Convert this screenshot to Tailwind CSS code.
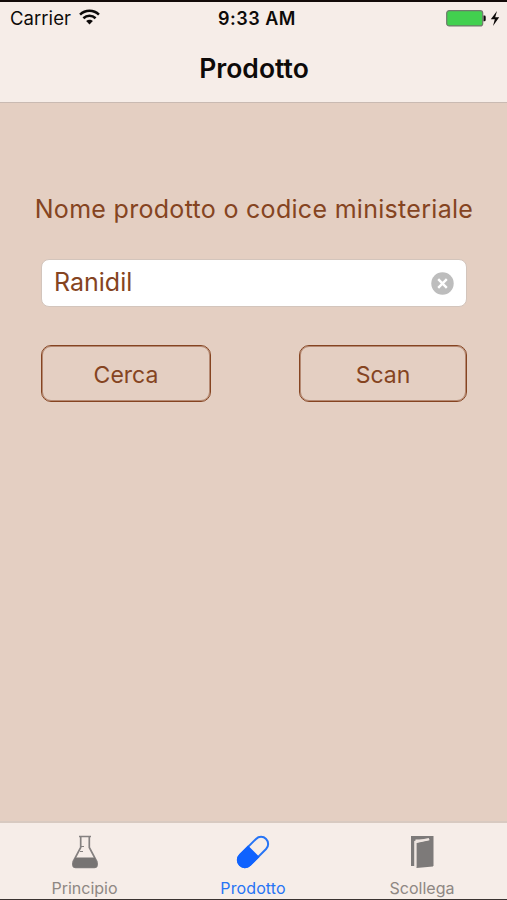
<!DOCTYPE html>
<html lang="it">
<head>
    <meta charset="UTF-8">
    <meta name="viewport" content="width=device-width, initial-scale=1.0">
    <title>Prodotto</title>
    <script src="https://cdn.jsdelivr.net/npm/@tailwindcss/browser@4"></script>
</head>
<body class="bg-[#e4cfc2] font-['Inter','Liberation_Sans',sans-serif]">

    <div class="flex flex-col h-[900px] w-[507px] overflow-hidden border-t-2 border-b border-t-[#130b09] border-b-[#3a3230]">

        <header class="h-[101px] shrink-0 bg-[#f6ede8] border-b border-[#c9bab2] text-[#0d0a09]">
            <!-- status bar -->
            <div class="grid grid-cols-3 items-center h-8 pl-[10px] pr-[7px] leading-8 whitespace-nowrap">
                <div class="flex items-center gap-[8px]">
                    <span class="text-[18.5px] tracking-[0.05px]">Carrier</span>
                    <svg class="w-[21px] h-[16px] -mt-[2px]" viewBox="0 0 20 15" fill="none" stroke="currentColor" stroke-width="2.4">
                        <path d="M1 5.2C6 .3 14 .3 19 5.2"/>
                        <path d="M4.2 8.7C7.5 5.5 12.5 5.5 15.8 8.7"/>
                        <path d="M10 14.6L6.8 11.3C8.6 9.6 11.4 9.6 13.2 11.3Z" fill="currentColor" stroke="none"/>
                    </svg>
                </div>
                <div class="pt-px pl-[4px] text-center text-[18px] leading-[31px] tracking-[0.5px] font-semibold">9:33 AM</div>
                <div class="flex items-center justify-end">
                    <svg class="w-[54px] h-[17px]" viewBox="0 0 54 17">
                        <rect x=".7" y=".7" width="36" height="15.2" rx="2.5" fill="#42d04f" stroke="#6f7a6c" stroke-width="1.2"/>
                        <path d="M37.5 5.5h.8q1.4 0 1.4 1.4v3q0 1.4-1.4 1.4h-.8z" fill="#0d0a09"/>
                        <path d="M51 1L44.8 9.3h4L47 16l6.2-8.7h-4z" fill="#0d0a09"/>
                    </svg>
                </div>
            </div>
            <h1 class="mt-[14px] pl-px text-center text-[26.5px] leading-10 font-semibold">Prodotto</h1>
        </header>

        <main class="flex-1 pl-[41px] pr-[40px] pt-[86px] text-[#854421] text-[25px]">
            <p class="-mx-5 text-center leading-10 tracking-[0.3px] whitespace-nowrap">Nome prodotto o codice ministeriale</p>

            <div class="mt-[30px] flex items-center justify-between h-[48px] px-[12px] bg-white border border-[#d3c5bc] rounded-lg">
                <span>Ranidil</span>
                <svg class="size-[23px]" viewBox="0 0 23 23">
                    <circle cx="11.5" cy="11.5" r="11.2" fill="#bdbdbd"/>
                    <path d="M7.2 7.2l8.6 8.6M15.8 7.2l-8.6 8.6" stroke="#fff" stroke-width="2.4"/>
                </svg>
            </div>

            <div class="mt-[38px] flex justify-between text-[23px]">
                <button class="w-[170px] h-[57px] pt-[3px] border border-[#854421] rounded-[10px] shadow-[inset_0_0_0_1px_#85442180]">Cerca</button>
                <button class="w-[168px] h-[57px] pt-[3px] border border-[#854421] rounded-[10px] shadow-[inset_0_0_0_1px_#85442180]">Scan</button>
            </div>
        </main>

        <!-- tab bar -->
        <nav class="grid grid-cols-3 h-[78px] shrink-0 bg-[#f6ede8] border-t-2 border-[#d8cac1] text-[#8e8783] text-[16px] leading-5">
            <div class="flex flex-col items-center pt-3">
                <svg class="w-[28px] h-[34px]" viewBox="0 0 28 34" fill="none" stroke="#858180" stroke-width="1.7">
                    <path d="M8 1.5h12M9.7 2v10.5L2.2 26.5Q.8 32.5 4.5 32.5h19Q27.2 32.5 25.8 26.5L18.3 12.5V2"/>
                    <path d="M10 11.5h3M9 16.5h3" stroke-width="1"/>
                    <path d="M4.3 22.5h19.4l2.1 4.5Q27.2 32.5 23.5 32.5h-19Q.8 32.5 2.2 27z" fill="#777473" stroke="none"/>
                </svg>
                <span class="mt-[9px]">Principio</span>
            </div>
            <div class="flex flex-col items-center pt-3 pr-px text-[#2674f5]">
                <svg class="w-[34px] h-[34px]" viewBox="0 0 34 34">
                    <g transform="rotate(45 17 17)">
                        <rect x="9.9" y="-1.5" width="14.2" height="37" rx="7.1" fill="#f6ede8" stroke="#2674f5" stroke-width="2"/>
                        <path d="M8.9 16h16.2v12.4a8.1 8.1 0 0 1-16.2 0z" fill="#0f62fe"/>
                    </g>
                </svg>
                <span class="mt-[9px] tracking-[0.1px]">Prodotto</span>
            </div>
            <div class="flex flex-col items-center pt-3 pr-px">
                <svg class="w-[24px] h-[34px]" viewBox="0 0 24 34">
                    <path d="M1 1h22.5v30h-4V4.5H5.5V31H1z" fill="#7d7a79"/>
                    <path d="M6.5 8L23 4.5v27L6.5 33z" fill="#7d7a79"/>
                    <path d="M5.2 32V6.8L19 4" fill="none" stroke="#eee5e0" stroke-width="2"/>
                </svg>
                <span class="mt-[9px]">Scollega</span>
            </div>
        </nav>
    </div>

</body>
</html>
